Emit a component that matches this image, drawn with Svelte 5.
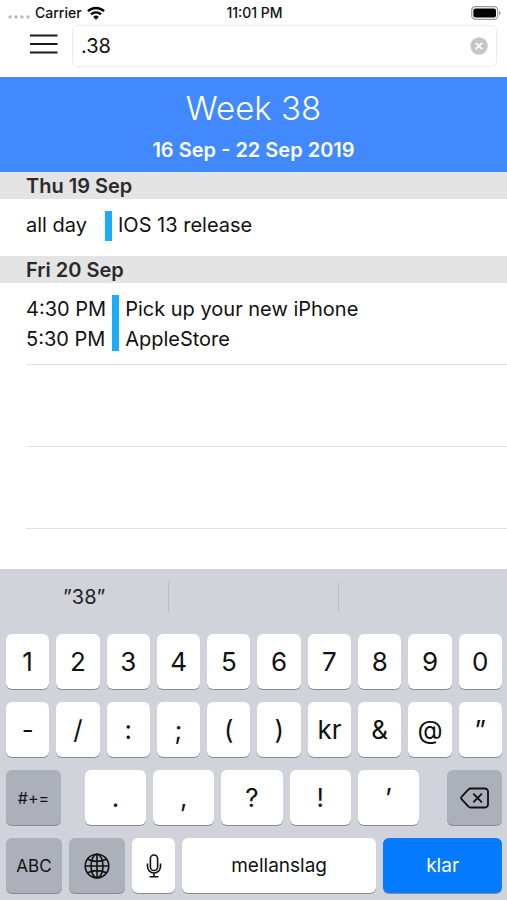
<script>
    let query = '.38';

    const days = [
        { title: 'Thu 19 Sep', times: ['all day'], lines: ['IOS 13 release'] },
        {
            title: 'Fri 20 Sep',
            times: ['4:30 PM', '5:30 PM'],
            lines: ['Pick up your new iPhone', 'AppleStore']
        }
    ];

    const keyRows = [
        ['1', '2', '3', '4', '5', '6', '7', '8', '9', '0'],
        ['-', '/', ':', ';', '(', ')', 'kr', '&', '@', '”']
    ];
    const punctuation = ['.', ',', '?', '!', '’'];

    function type(key) {
        query += key;
    }

    function clear() {
        query = '';
    }

    function backspace() {
        query = query.slice(0, -1);
    }
</script>

<div class="screen">
    <div class="status">
        <div class="carrier">
            <svg class="dots" viewBox="0 0 22 4" width="22" height="4">
                <circle cx="2" cy="2" r="1.7" />
                <circle cx="8" cy="2" r="1.7" />
                <circle cx="14" cy="2" r="1.7" />
                <circle cx="20" cy="2" r="1.7" />
            </svg>
            <span>Carrier</span>
            <svg viewBox="0 0 18 14" width="18" height="14">
                <path d="M1 5.2a11.4 11.4 0 0 1 16 0" fill="none" stroke="#000" stroke-width="2.5" />
                <path d="M4 8.4a7.2 7.2 0 0 1 10 0" fill="none" stroke="#000" stroke-width="2.3" />
                <path d="M9 13.8l-2.8-2.9a4 4 0 0 1 5.6 0z" />
            </svg>
        </div>
        <time>11:01 PM</time>
        <div class="battery">
            <svg viewBox="0 0 30 14" width="30" height="14">
                <rect x="0.7" y="0.7" width="26" height="12.6" rx="3.6" fill="none" stroke="#999" stroke-width="1.2" />
                <rect x="2.4" y="2.4" width="22.6" height="9.2" rx="2" />
                <path d="M28 5v4q1.6-.6 1.6-2T28 5z" fill="#999" />
            </svg>
        </div>
    </div>

    <div class="toolbar">
        <button class="menu" aria-label="Menu">
            <svg viewBox="0 0 28 20" width="28" height="20">
                <path d="M0 1.5h27.5M0 10h27.5M0 18.500h27.500" stroke="#1a1a1a" stroke-width="2" />
            </svg>
        </button>
        <div class="search">
            <input type="text" aria-label="Search" bind:value={query} />
            <button class="clear" aria-label="Clear" on:click={clear}>
                <svg viewBox="0 0 18 18" width="18" height="18">
                    <circle cx="9" cy="9" r="8.7" fill="#c6c6c8" />
                    <path d="M5.8 5.8l6.4 6.4M12.2 5.8l-6.4 6.4" stroke="#fff" stroke-width="1.8" />
                </svg>
            </button>
        </div>
    </div>

    <header>
        <h1>Week 38</h1>
        <p>16 Sep - 22 Sep 2019</p>
    </header>

    <main>
        {#each days as day}
            <section>
                <h2>{day.title}</h2>
                <div class="event" class:tall={day.lines.length > 1}>
                    <div class="times">
                        {#each day.times as time}
                            <div>{time}</div>
                        {/each}
                    </div>
                    <div class="details">
                        {#each day.lines as line}
                            <div>{line}</div>
                        {/each}
                    </div>
                </div>
            </section>
        {/each}
        <div class="empty"></div>
        <div class="empty"></div>
    </main>

    <div class="keyboard">
        <div class="suggestions">
            <button on:click={() => (query = '38')}>”38”</button>
            <button aria-label="Suggestion 2"></button>
            <button aria-label="Suggestion 3"></button>
        </div>

        {#each keyRows as row}
            <div class="row">
                {#each row as key}
                    <button class="key" on:click={() => type(key)}>{key}</button>
                {/each}
            </div>
        {/each}

        <div class="row">
            <button class="key dark symbols">#+=</button>
            <div class="punctuation">
                {#each punctuation as key}
                    <button class="key" on:click={() => type(key)}>{key}</button>
                {/each}
            </div>
            <button class="key dark side" aria-label="Backspace" on:click={backspace}>
                <svg viewBox="0 0 30 22" width="30" height="22" fill="none" stroke="#111" stroke-width="1.8">
                    <path d="M10.5 1.5H25a3 3 0 0 1 3 3v13a3 3 0 0 1-3 3H10.5a3 3 0 0 1-2-.8L1.8 12.4a2 2 0 0 1 0-2.8l6.7-7.3a3 3 0 0 1 2-.8z" />
                    <path d="M13.3 6.6l8.6 8.8M21.9 6.6l-8.6 8.8" />
                </svg>
            </button>
        </div>

        <div class="row">
            <button class="key dark letters">ABC</button>
            <button class="key dark globe" aria-label="Next keyboard">
                <svg viewBox="0 0 26 26" width="26" height="26" fill="none" stroke="#111" stroke-width="1.6">
                    <circle cx="13" cy="13" r="11.8" />
                    <ellipse cx="13" cy="13" rx="6" ry="11.8" />
                    <path d="M13 1v24M1 13h24M3.6 6.2q9.4 4.4 18.8 0M3.6 19.8q9.4-4.4 18.8 0" />
                </svg>
            </button>
            <button class="key mic" aria-label="Dictate">
                <svg viewBox="0 0 16 24" width="16" height="24" fill="none" stroke="#111" stroke-width="1.6">
                    <rect x="4.4" y="1" width="7.2" height="15.5" rx="3.6" />
                    <path d="M1.5 9.5v3a6.5 6.5 0 0 0 13 0v-3M8 19v3.5M3.6 22.7h8.8" />
                </svg>
            </button>
            <button class="key space" on:click={() => type(' ')}>mellanslag</button>
            <button class="key done">klar</button>
        </div>
    </div>
</div>

<style>
    :global(body) {
        margin: 0;
        background: #fff;
    }

    .screen {
        display: flex;
        flex-direction: column;
        min-height: 100vh;
        font-family: Inter, Roboto, sans-serif;
        font-size: 20px;
        color: #111;
    }

    button {
        padding: 0;
        border: none;
        background: none;
        font: inherit;
        color: inherit;
        cursor: pointer;
    }

    svg {
        display: block;
    }

    .status {
        display: grid;
        grid-template-columns: 1fr auto 1fr;
        align-items: center;
        height: 25px;
        padding: 0 6px 0 8px;
        font-size: 14px;
        font-weight: 500;
    }

    .carrier {
        display: flex;
        align-items: center;
        gap: 5px;
    }

    .dots {
        margin-top: 8px;
        fill: #bbb;
    }

    .battery {
        justify-self: end;
    }

    .toolbar {
        display: flex;
        gap: 14px;
        height: 42px;
        padding: 0 10px 10px 30px;
    }

    .menu {
        height: 38px;
    }

    .search {
        display: flex;
        flex: 1;
        align-items: center;
        box-sizing: border-box;
        padding: 0 8px;
        border: 1px solid #ececec;
        border-radius: 6px;
    }

    input {
        flex: 1;
        min-width: 0;
        padding: 0;
        border: none;
        outline: none;
        background: none;
        font: inherit;
        color: #111;
    }

    header {
        display: flex;
        flex-direction: column;
        align-items: center;
        box-sizing: border-box;
        height: 95px;
        padding-top: 9px;
        background: #4189fc;
        color: #fff;
    }

    h1 {
        margin: 0;
        font-size: 33px;
        font-weight: 300;
        line-height: 44px;
    }

    header p {
        margin: 0;
        font-weight: 600;
        line-height: 40px;
    }

    main {
        flex: 1;
        padding-bottom: 40px;
    }

    h2 {
        margin: 0;
        padding: 2px 0 0 26px;
        background: #e4e4e4;
        font-size: 20px;
        font-weight: 600;
        line-height: 25px;
        color: #2a2a2a;
    }

    .event {
        display: flex;
        align-items: flex-start;
        gap: 6px;
        box-sizing: border-box;
        height: 57px;
        margin-left: 26px;
        padding-top: 12px;
    }

    .event.tall {
        height: 82px;
        border-bottom: 1px solid #e2e2e2;
    }

    .times {
        min-width: 73px;
    }

    .details {
        padding-left: 6px;
        border-left: 7px solid #1badf8;
    }

    .times div,
    .details div {
        height: 30px;
        line-height: 28px;
    }

    .tall .details {
        height: 56px;
    }

    .empty {
        box-sizing: border-box;
        height: 82px;
        margin-left: 26px;
        border-bottom: 1px solid #e2e2e2;
    }

    .keyboard {
        display: flex;
        flex-direction: column;
        gap: 13px;
        padding: 0 5px 7px 6px;
        background: #d0d3da;
    }

    .suggestions {
        display: flex;
        height: 30px;
        padding: 13px 0 9px;
        margin: 0 -5px 0 -6px;
    }

    .suggestions button {
        flex: 1;
        color: #222;
    }

    .suggestions button + button {
        border-left: 1px solid #b9bcc3;
    }

    .row {
        display: flex;
        gap: 7px;
        height: 55px;
    }

    .key {
        display: flex;
        flex: 1 1 0;
        align-items: center;
        justify-content: center;
        min-width: 0;
        border-radius: 6px;
        background: #fff;
        box-shadow: 0 1px 0 #888b91;
        font-size: 26px;
    }

    .dark {
        background: #abb0bb;
    }

    .symbols,
    .side {
        flex: 0 0 55px;
    }

    .symbols {
        font-size: 16px;
    }

    .punctuation {
        display: flex;
        flex: 1;
        gap: 7px;
        padding: 0 21px 0 17px;
    }

    .letters,
    .globe {
        flex: 0 0 56px;
    }

    .letters {
        font-size: 17px;
    }

    .mic {
        flex: 0 0 43px;
    }

    .space {
        flex: 193;
        font-size: 19px;
    }

    .done {
        flex: 118;
        background: #047bff;
        color: #fff;
        font-size: 19px;
    }
</style>
